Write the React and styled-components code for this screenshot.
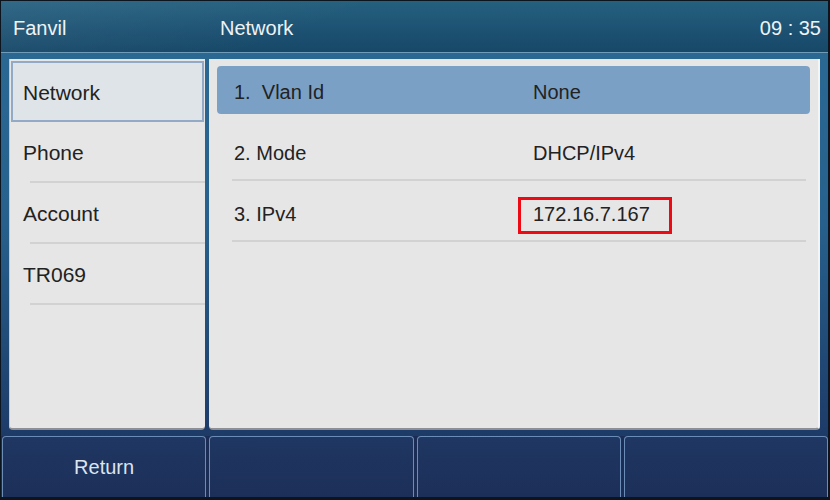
import React from 'react';
import styled, { createGlobalStyle } from 'styled-components';

const GlobalStyle = createGlobalStyle`
  html, body {
    margin: 0;
    padding: 0;
    background: #0c141d;
  }
  body {
    font-family: "Liberation Sans", Arial, sans-serif;
  }
`;

const menuItems = ['Network', 'Phone', 'Account', 'TR069'];

const settings = [
  { label: '1.  Vlan Id', value: 'None' },
  { label: '2. Mode', value: 'DHCP/IPv4' },
  { label: '3. IPv4', value: '172.16.7.167', marked: true },
];

const softKeys = ['Return', '', '', ''];

function App() {
  return (
    <>
      <GlobalStyle />
      <Frame>
        <Screen>
          <Header>
            <HeaderText>Fanvil</HeaderText>
            <HeaderText>Network</HeaderText>
            <HeaderText>09 : 35</HeaderText>
          </Header>
          <Body>
            <SidePanel>
              {menuItems.map((item, i) => (
                <MenuItem key={item} selected={i === 0}>
                  {item}
                </MenuItem>
              ))}
            </SidePanel>
            <MainPanel>
              {settings.map((s, i) => (
                <SettingRow key={s.label} highlighted={i === 0}>
                  <SettingInner highlighted={i === 0}>
                    <Label>{s.label}</Label>
                    <Value marked={s.marked}>{s.value}</Value>
                  </SettingInner>
                </SettingRow>
              ))}
            </MainPanel>
          </Body>
          <SoftKeyBar>
            {softKeys.map((k, i) => (
              <SoftKey key={i}>{k}</SoftKey>
            ))}
          </SoftKeyBar>
        </Screen>
      </Frame>
    </>
  );
}

const Frame = styled.div`
  width: 830px;
  height: 500px;
  box-sizing: border-box;
  padding: 1px 2px 3px 1px;
  background: #0c141d;
`;

const Screen = styled.div`
  height: 100%;
  display: flex;
  flex-direction: column;
  background: linear-gradient(180deg, #2b6b95 0%, #27608c 45%, #1e3d6a 85%, #1b2f58 100%);
`;

const Header = styled.div`
  height: 51px;
  flex-shrink: 0;
  display: grid;
  grid-template-columns: 207px 1fr auto;
  align-items: center;
  padding: 0 7px 0 12px;
  background:
    linear-gradient(160deg, rgba(255,255,255,0.06) 0%, rgba(255,255,255,0) 40%),
    linear-gradient(180deg, #25607f 0%, #1d5273 55%, #174868 100%);
  border-bottom: 1px solid #6f9cb8;
`;

const HeaderText = styled.div`
  color: #eef3f6;
  font-size: 20px;
  padding-top: 3px;
`;

const Body = styled.div`
  flex: 1;
  display: grid;
  grid-template-columns: 196px 611px;
  gap: 4px;
  padding: 6px 0 6px 8px;
`;

const SidePanel = styled.div`
  background: #e6e6e6;
  border-left: 1px solid #bccbd8;
  border-bottom: 2px solid #8d8f92;
  border-radius: 0 0 4px 4px;
  padding: 2px 0 0 1px;
  display: flex;
  flex-direction: column;
`;

const MenuItem = styled.div`
  position: relative;
  height: 61px;
  box-sizing: border-box;
  display: flex;
  align-items: center;
  padding-left: ${p => (p.selected ? '10px' : '12px')};
  padding-top: ${p => (p.selected ? '3px' : '0')};
  font-size: 21px;
  color: #222;
  background: ${p => (p.selected ? '#dfe4e8' : 'transparent')};
  border: ${p => (p.selected ? '2px solid #93aac6' : 'none')};
  margin-right: ${p => (p.selected ? '1px' : '0')};

  ${p => !p.selected && `
    &::after {
      content: '';
      position: absolute;
      left: 19px;
      right: 0;
      bottom: 0;
      height: 2px;
      background: #d2d2d2;
    }
  `}
`;

const MainPanel = styled.div`
  background: #e6e6e6;
  border-bottom: 2px solid #8d8f92;
  border-right: 2px solid #f4f4f4;
  border-radius: 0 0 4px 4px;
  display: flex;
  flex-direction: column;
`;

const SettingRow = styled.div`
  position: relative;
  height: 61px;
  box-sizing: border-box;
  padding: ${p => (p.highlighted ? '7px 8px 6px' : '0')};

  ${p => !p.highlighted && `
    &::after {
      content: '';
      position: absolute;
      left: 23px;
      right: 12px;
      bottom: 0;
      height: 2px;
      background: #d2d2d2;
    }
  `}
`;

const SettingInner = styled.div`
  height: 100%;
  display: grid;
  grid-template-columns: 299px 1fr;
  align-items: center;
  padding-left: ${p => (p.highlighted ? '17px' : '25px')};
  padding-top: ${p => (p.highlighted ? '4px' : '6px')};
  box-sizing: border-box;
  background: ${p => (p.highlighted ? '#7ba0c6' : 'transparent')};
  border-radius: ${p => (p.highlighted ? '4px' : '0')};
  font-size: 20px;
  color: #222;
`;

const Label = styled.span`
  white-space: pre;
`;

const Value = styled.span`
  position: relative;
  justify-self: start;

  ${p => p.marked && `
    &::after {
      content: '';
      position: absolute;
      left: -15px;
      top: -6px;
      width: 148px;
      height: 31px;
      border: 3px solid #ee0a14;
    }
  `}
`;

const SoftKeyBar = styled.div`
  height: 61px;
  flex-shrink: 0;
  display: grid;
  grid-template-columns: repeat(4, 1fr);
  gap: 3px;
  padding: 0 0 0 1px;
  background: #1b2d54;
`;

const SoftKey = styled.div`
  display: flex;
  align-items: center;
  justify-content: center;
  color: #dce4ee;
  font-size: 20px;
  border: 1px solid #6b8cb6;
  border-bottom: none;
  border-radius: 4px 4px 0 0;
  background: linear-gradient(180deg, #1f3763 0%, #1c2f58 100%);
`;

export default App;
